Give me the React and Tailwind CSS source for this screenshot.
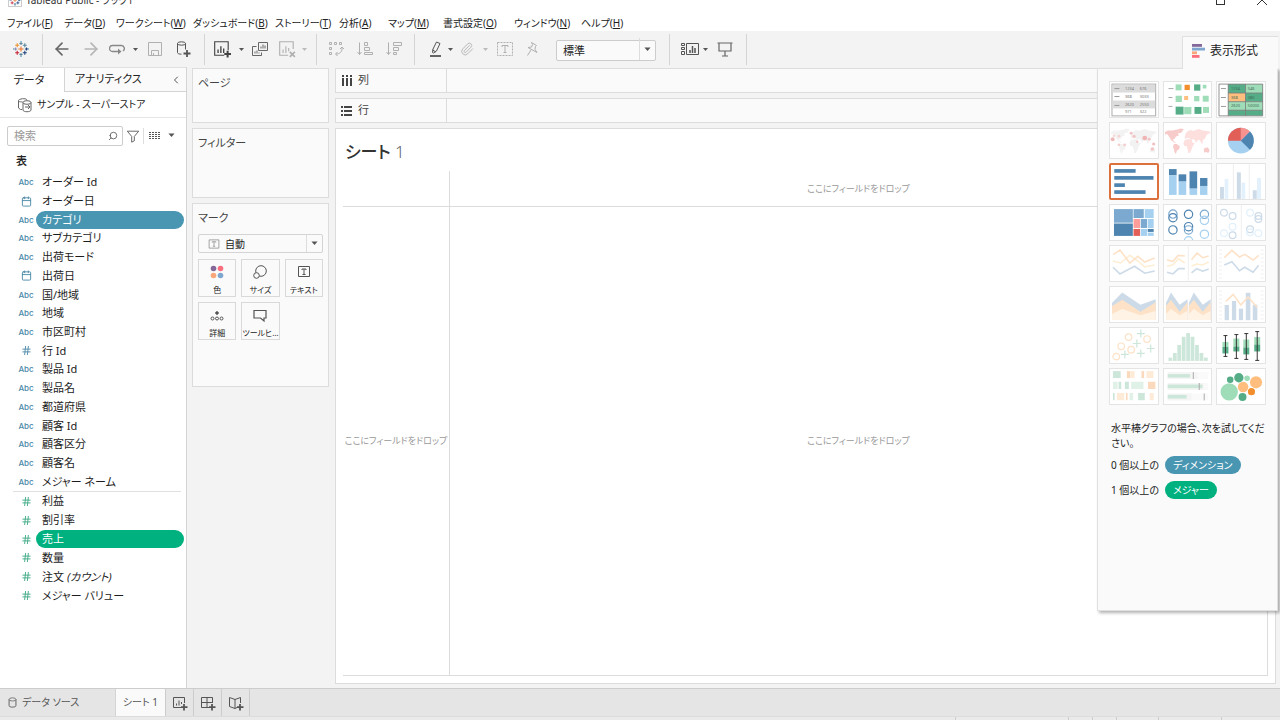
import { ArrowLeft, ArrowRight, Calendar, ChevronLeft, Hash, Paperclip, Search } from 'lucide-react';

const MENUS = [
  { label: 'ファイル', key: 'F', width: 'w-[57px]' },
  { label: 'データ', key: 'D', width: 'w-[52px]' },
  { label: 'ワークシート', key: 'W', width: 'w-[77px]' },
  { label: 'ダッシュボード', key: 'B', width: 'w-[82px]' },
  { label: 'ストーリー', key: 'T', width: 'w-[64px]' },
  { label: '分析', key: 'A', width: 'w-[49px]' },
  { label: 'マップ', key: 'M', width: 'w-[55px]' },
  { label: '書式設定', key: 'O', width: 'w-[71px]' },
  { label: 'ウィンドウ', key: 'N', width: 'w-[67px]' },
  { label: 'ヘルプ', key: 'H', width: 'w-[57px]' },
];

const DIMENSIONS = [
  { name: 'オーダー Id', type: 'abc' },
  { name: 'オーダー日', type: 'date' },
  { name: 'カテゴリ', type: 'abc', selected: true },
  { name: 'サブカテゴリ', type: 'abc' },
  { name: '出荷モード', type: 'abc' },
  { name: '出荷日', type: 'date' },
  { name: '国/地域', type: 'abc' },
  { name: '地域', type: 'abc' },
  { name: '市区町村', type: 'abc' },
  { name: '行 Id', type: 'num' },
  { name: '製品 Id', type: 'abc' },
  { name: '製品名', type: 'abc' },
  { name: '都道府県', type: 'abc' },
  { name: '顧客 Id', type: 'abc' },
  { name: '顧客区分', type: 'abc' },
  { name: '顧客名', type: 'abc' },
  { name: 'メジャー ネーム', type: 'abc' },
];

const MEASURES = [
  { name: '利益', type: 'num' },
  { name: '割引率', type: 'num' },
  { name: '売上', type: 'num', selected: true },
  { name: '数量', type: 'num' },
  { name: '注文', note: '(カウント)', type: 'num' },
  { name: 'メジャー バリュー', type: 'num' },
];

// chart palette
const DK = '#4e84b0';
const MD = '#7ba9cf';
const LT = '#a5d0f0';
const G1 = '#55ad88';
const G2 = '#9fdcb8';
const O1 = '#f28e2b';
const O2 = '#ffbe7d';
const FB = '#cddbe8';
const FO = '#fde2c8';
const FY = '#fdeed4';
const FG = '#cde6da';

function Rects({ items }) {
  return items.map(([x, y, w, h, fill], i) => <rect key={i} x={x} y={y} width={w} height={h} fill={fill} />);
}

function Circles({ items }) {
  return items.map(([cx, cy, r, fill], i) => <circle key={i} cx={cx} cy={cy} r={r} fill={fill} />);
}

function Rings({ items, width = 1.2 }) {
  return items.map(([cx, cy, r, stroke], i) => (
    <circle key={i} cx={cx} cy={cy} r={r} fill="none" stroke={stroke} strokeWidth={width} />
  ));
}

function Lines({ items }) {
  return items.map(([points, stroke], i) => (
    <polyline key={i} points={points} fill="none" stroke={stroke} strokeWidth="1.6" />
  ));
}

function Areas({ items }) {
  return items.map(([points, fill], i) => <polygon key={i} points={points} fill={fill} />);
}

function Cells({ items, fill }) {
  return items.map(([x, y, t]) => (
    <text key={`${x}-${y}`} x={x} y={y} fontSize="4" fill={fill}>{t}</text>
  ));
}

function World({ fill, fill2 }) {
  return (
    <>
      <path fill={fill2} d="M2 10l3-1.500 5 0 4-1 3 3-2 1 1 2-3 1-1 2-2 1 1 2 2 1-1 .5-4-3-1-2-2-3-1-1-2 .5zM11 22l3 0 3 2.500-1 3-2 1-1 3.500-1.500-2-.5-3-1-2zM14 8l3-1.500 4 .5-2 3-2 1.500-1-2z" />
      <path fill={fill} d="M22 14l1-3 3-2.500 3-.5 1 1 6-2 4 1.500 7 1 1 1.500-3 1-1 1-1 2-1 2-2 1 0 3-1 1-2-4-2 0-1.500 3-1.500-3-2-1-1 1-3-2-2 0-2 1zM22 18l4-1 3 1 1 3 2 0-2 3-1 3-2 4-1.500 0-1-5-1-2-2 0-1-3z" />
      <path fill={fill2} d="M41 27l2-1.500 1 .5 1-1 2 3.500-1.500 2.500-2-1-2 .5z" />
    </>
  );
}

function SideTicks() {
  return (
    <path
      stroke="#ececec"
      strokeWidth=".8"
      d="M3 5h3M3 9h3M3 13h3M3 17h3M3 21h3M3 25h3M3 29h3M3 33h3M45 5h3M45 9h3M45 13h3M45 17h3M45 21h3M45 25h3M45 29h3M45 33h3"
    />
  );
}

function Whisker({ x, top, q1, mid, q3, bottom }) {
  return (
    <>
      <rect x={x - 3} y={q1} width="6" height={mid - q1} fill={G2} />
      <rect x={x - 3} y={mid} width="6" height={q3 - mid} fill={G1} />
      <path d={`M${x} ${top}V${bottom}M${x - 2} ${top}h4M${x - 2} ${bottom}h4`} stroke="#333" strokeWidth="1" />
    </>
  );
}

const CHARTS = [
  {
    name: 'テキスト表',
    art: (
      <>
        <rect x="3" y="3" width="44" height="32" fill="#fff" stroke="#aaa" />
        <Rects items={[[3.5, 3.5, 43, 8, '#dcdcdc'], [3.5, 19.5, 43, 8, '#dcdcdc']]} />
        <path d="M5.500 7.500h5M5.500 15.500h5M5.500 24.500h5" stroke="#999" />
        <Cells fill="#777" items={[[16, 9, '1234'], [31, 9, '676'], [16, 17, '368'], [31, 17, '3033'], [16, 25.5, '2620'], [31, 25.5, '2550'], [16, 32.500, '971'], [31, 32.500, '322']]} />
      </>
    ),
  },
  {
    name: 'ヒートマップ',
    art: (
      <>
        <path d="M5.500 7.500h5M5.500 16.500h4M5.500 25.500h4" stroke="#aaa" />
        <Rects
          items={[
            [12.7, 3.3, 6, 6, G2], [21.7, 3.7, 5.3, 5.3, O1], [31.3, 3.3, 6.3, 6.3, G1], [40, 3.7, 3.7, 3.7, G2],
            [12.7, 14.7, 6.3, 6.3, G2], [21.3, 15, 4, 4, O2], [31.3, 15, 5.3, 5.3, G2], [40, 14.7, 6, 6, G2],
            [12.7, 25.7, 8, 8, G1], [21.3, 26, 7.3, 7.3, G2], [31.7, 26, 7, 7, G1], [40.3, 26, 6, 6, G2],
          ]}
        />
      </>
    ),
  },
  {
    name: 'ハイライト表',
    art: (
      <>
        <Rects
          items={[
            [12.3, 3, 17.4, 9, G1], [29.7, 3, 17.3, 9, G2], [12.3, 12, 17.4, 8.7, O2], [29.7, 12, 17.3, 8.7, G1],
            [12.3, 20.7, 17.4, 8.6, G2], [29.7, 20.7, 17.3, 8.6, G2], [12.3, 29.3, 17.4, 5.5, G1], [29.7, 29.3, 17.3, 5.5, G1],
          ]}
        />
        <path d="M3 3h44v32H3zM12.300 3v32M29.700 3v32M12.300 12H47M12.300 20.700H47M12.300 29.300H47" fill="none" stroke="#777" strokeWidth=".8" />
        <path d="M5 7.500h5M5 16.500h5M5 25.500h5" stroke="#999" />
        <Cells fill="#3f6b56" items={[[15, 9, '1234'], [32, 9, '546'], [15, 17.500, '368'], [32, 17.500, '380'], [15, 26.500, '2620'], [32, 26.500, '50000']]} />
      </>
    ),
  },
  {
    name: '記号マップ',
    art: (
      <>
        <World fill="#f2f2f2" fill2="#f3f3f3" />
        <Circles
          items={[
            [3.7, 17.3, 2, '#efb9b9'], [5, 13.7, 1.2, '#f7d5d5'], [10, 14.3, 1.5, '#f7d5d5'], [22.3, 11.3, 1.5, '#f2c4c4'], [25.3, 14.3, 1.6, '#f2c4c4'],
            [28.3, 19.7, 1.2, '#f5cccc'], [36, 16, 2.4, '#efb4b4'], [40.500, 17.3, 1.5, '#f2c4c4'], [45, 22, 1.6, '#f2c0c0'],
            [15.7, 23, 1.4, '#f5cccc'], [10, 22.7, 1.3, '#f5cccc'], [43.7, 27, 1.7, '#f2c4c4'],
          ]}
        />
      </>
    ),
  },
  { name: 'マップ', art: <World fill="#fddfde" fill2="#f6cbc9" /> },
  {
    name: '円グラフ',
    art: (
      <>
        <circle cx="25" cy="18.700" r="13" fill={LT} />
        <path d="M25 18.700V5.700A13 13 0 0 1 34.200 9.500z" fill="#f7928f" />
        <path d="M25 18.700L34.200 9.500A13 13 0 0 1 34.200 27.900z" fill={DK} />
        <path d="M25 18.700H12A13 13 0 0 1 25 5.700z" fill="#e15f57" />
      </>
    ),
  },
  {
    name: '水平棒',
    selected: true,
    art: <Rects items={[[5.3, 6, 21.500, 3.7, DK], [5.3, 13, 39.500, 3.7, DK], [5.3, 20.3, 10.7, 3.7, DK], [5.3, 27.3, 31.500, 3.7, DK]]} />,
  },
  {
    name: '積み上げ棒',
    art: (
      <Rects
        items={[
          [6, 6, 7.7, 6.3, DK], [6, 12.3, 7.7, 19.7, LT], [15.7, 11.3, 7.7, 7.3, DK], [15.7, 18.6, 7.7, 13.4, LT],
          [26.7, 8.3, 7.7, 17.4, DK], [26.7, 25.7, 7.7, 6.3, LT], [37.3, 15, 7.4, 8, DK], [37.3, 23, 7.4, 9, LT],
        ]}
      />
    ),
  },
  {
    name: '並列棒',
    art: (
      <>
        <path d="M17.500 1v35M33.500 1v35" stroke="#eee" />
        <Rects
          items={[
            [4, 24, 4, 12, FB], [8.7, 16, 3.7, 20, '#e3f1fc'], [21, 9.3, 4, 26.7, FB],
            [25.7, 19.7, 3.7, 16.3, '#e3f1fc'], [37, 27.3, 4, 8.7, FB], [41.3, 15, 4, 21, '#e3f1fc'],
          ]}
        />
      </>
    ),
  },
  {
    name: 'ツリーマップ',
    art: (
      <Rects
        items={[
          [5, 5, 19, 13.7, MD], [5, 19.500, 19, 12.500, DK], [24.7, 5, 10.3, 9, MD], [36, 5, 9, 9, LT],
          [24.7, 15, 6.6, 9, '#ff9d9a'], [32, 15, 6.3, 9, MD], [39, 15, 6, 9, LT],
          [24.7, 25, 6.6, 7, '#e15f57'], [32, 25, 6.3, 7, LT], [39, 25, 6, 3, DK], [39, 28.7, 6, 3.3, LT],
        ]}
      />
    ),
  },
  {
    name: '円ビュー',
    art: (
      <Rings
        items={[
          [10, 10, 4.2, MD], [10, 13.7, 4.2, DK], [10, 26, 4.2, DK], [25.7, 10.3, 4.2, DK], [25.7, 22.7, 4.2, DK],
          [25.7, 26, 4.2, MD], [25.7, 37, 4.2, LT], [41.7, 10.3, 4.2, MD], [41.7, 16.3, 4.2, LT], [41.7, 30.3, 4.2, LT],
        ]}
      />
    ),
  },
  {
    name: '並列円',
    art: (
      <>
        <path d="M25.500 1v35" stroke="#eee" />
        <Rings
          items={[
            [8, 8.7, 3.4, FB], [16.7, 12, 3.4, FB], [16.7, 22.7, 3.4, '#e3f1fc'], [8, 29.3, 3.4, '#e3f1fc'], [16.7, 31.3, 3.4, FB],
            [34.3, 8.7, 3.4, '#e3f1fc'], [42.7, 12, 3.4, FB], [42.7, 15, 3.4, FB], [34.3, 25.3, 3.4, FB], [34.3, 28.3, 3.4, '#e3f1fc'], [42.7, 29.3, 3.4, '#e3f1fc'],
          ]}
        />
      </>
    ),
  },
  {
    name: '線 (連続)',
    art: (
      <Lines
        items={[
          ['4,16 11.700,18 21,10.300 29,16 36,22 46,20', FY],
          ['4,9.500 11,5 21,18 29,11.300 36,17 46,13', FO],
          ['4,22.300 11,29 25.700,21.300 36,28.300 46,26', FB],
        ]}
      />
    ),
  },
  {
    name: '線 (不連続)',
    art: (
      <>
        <path d="M25.500 1v35" stroke="#eee" />
        <Lines
          items={[
            ['4,15 10,16.300 15.300,10.300 22,11', FO], ['28.700,14.700 34.300,8 40,12.700 46,11', FO],
            ['4,21.300 10,19.700 15.700,13.700 22,18', FY], ['28.700,21 34,19 40,20 46,17', FY],
            ['4,27.300 10,29 15.700,23.700 22,23.700', FB], ['28.700,28 34,23.700 40,26.300 46,24', FB],
          ]}
        />
      </>
    ),
  },
  {
    name: '二重線',
    art: (
      <>
        <SideTicks />
        <Lines
          items={[
            ['8.300,12.700 16,5.300 23.700,12 29,9.300 37.300,15 43,10.300', FO],
            ['8.300,20 16,16.700 23.700,25.700 29,22.300 37.300,27.300 43,20.300', FB],
          ]}
        />
      </>
    ),
  },
  {
    name: '面 (連続)',
    art: (
      <Areas
        items={[
          ['3,17 13.300,6.300 31.700,18.700 47,13.300 47,34 3,34', FB],
          ['3,20 13.300,13.700 31.700,25.700 47,16.300 47,34 3,34', FO],
          ['3,28 13.300,23 31.700,29.300 47,25 47,34 3,34', '#fff3e6'],
        ]}
      />
    ),
  },
  {
    name: '面 (不連続)',
    art: (
      <Areas
        items={[
          ['3,17 8,6.300 16.700,18.700 24.700,13.300 24.700,34 3,34', FB],
          ['3,20 8,13.700 16.700,25.700 24.700,16.300 24.700,34 3,34', FO],
          ['3,28 8,23 16.700,29.300 24.700,25 24.700,34 3,34', '#fff3e6'],
          ['26,17 31,6.300 40,18.700 48,13.300 48,34 26,34', FB],
          ['26,20 31,13.700 40,25.700 48,16.300 48,34 26,34', FO],
          ['26,28 31,23 40,29.300 48,25 48,34 26,34', '#fff3e6'],
        ]}
      />
    ),
  },
  {
    name: '二重組み合わせ',
    art: (
      <>
        <SideTicks />
        <Rects items={[[8.7, 19, 4.3, 15.3, FB], [16, 15, 4.3, 19.3, FB], [23, 22.7, 4.3, 11.6, FB], [30, 6.7, 4.600, 27.6, FB], [37, 18.7, 4.600, 15.6, FB]]} />
        <Lines items={[['10,15.300 17.300,8.300 25,19 32.300,11 41.300,21.300', FO]]} />
      </>
    ),
  },
  {
    name: '散布図',
    art: (
      <>
        <Rings items={[[7.3, 29.7, 3.3, FO], [12.3, 19.3, 3.3, FO], [19.7, 10, 3.3, FO], [22.3, 22.7, 3.3, FO], [38.3, 12, 3.3, FO]]} />
        <path d="M12 27.500h8m-4-4v8M28 6.500h8m-4-4v8M24 16.500h8m-4-4v8M28 26.500h8m-4-4v8M38 21.500h8m-4-4v8" stroke={FG} strokeWidth="1.200" />
      </>
    ),
  },
  {
    name: 'ヒストグラム',
    art: (
      <Rects
        items={[
          [5.500, 30.7, 3.8, 3.3, FG], [10, 26, 3.8, 8, FG], [14.4, 18, 3.8, 16, FG], [18.9, 9.7, 3.8, 24.3, FG], [23.4, 6, 3.8, 28, FG],
          [27.8, 9.7, 3.8, 24.3, FG], [32.3, 18, 3.8, 16, FG], [36.800, 26, 3.8, 8, FG], [41.2, 30.7, 3.8, 3.3, FG],
        ]}
      />
    ),
  },
  {
    name: '箱ヒゲ図',
    art: (
      <>
        <Whisker x={9.5} top={8.5} q1={15} mid={20} q3={26.5} bottom={29.5} />
        <Whisker x={20.5} top={7.5} q1={11.5} mid={19.5} q3={24.5} bottom={31.5} />
        <Whisker x={30.5} top={6.5} q1={12.5} mid={20.5} q3={27.5} bottom={32.5} />
        <Whisker x={41.5} top={4.5} q1={10} mid={17.5} q3={24.5} bottom={33.5} />
      </>
    ),
  },
  {
    name: 'ガント',
    art: (
      <Rects
        items={[
          [4, 3, 7.7, 7, FG], [18, 3, 3.5, 7, '#fbd9bd'], [21.500, 3, 4.2, 7, '#fdebd8'], [32.7, 3, 2.7, 7, '#fbd9bd'], [37.7, 3, 7, 7, '#fdebd8'],
          [4, 13.7, 4.7, 7.3, '#e0f2e7'], [9.7, 13.7, 2.6, 7.3, FG], [16, 13.7, 4, 7.3, FG], [22.3, 13.7, 12.4, 7.3, '#e0f2e7'], [39.3, 13.7, 7.4, 7.3, '#fbd9bd'],
          [4, 25, 1.7, 7.3, FG], [8, 25, 7.3, 7.3, '#fdebd8'], [17, 25, 1.7, 7.3, '#fbd9bd'], [20.7, 25, 3.600, 7.3, '#e0f2e7'], [29.3, 25, 6.7, 7.3, FG], [41, 25, 4, 7.3, '#fdebd8'],
        ]}
      />
    ),
  },
  {
    name: 'ブレットグラフ',
    art: (
      <>
        <Rects
          items={[
            [4.7, 4, 41, 7, '#fafafa'], [4.7, 15, 41, 7, '#fafafa'], [4.7, 25.5, 41, 7, '#fafafa'],
            [4.7, 4, 30, 7, '#f5f5f5'], [4.7, 15, 36, 7, '#f5f5f5'], [4.7, 25.5, 24, 7, '#f5f5f5'],
            [4.7, 6, 22.5, 3.5, FG], [4.7, 16.5, 35, 3.7, FG], [4.7, 27, 19, 3.7, FG],
          ]}
        />
        <path d="M30.500 4v7M36.500 15v7M41.500 25.500v7" stroke="#aaa" />
      </>
    ),
  },
  {
    name: 'パック バブル',
    art: (
      <Circles
        items={[
          [14.3, 11.7, 3.3, G1], [23, 9.7, 4.7, G1], [31.3, 10.3, 2.8, G2], [40.3, 14.3, 6.1, O2],
          [13.3, 24, 8.7, G2], [27.3, 19, 5.3, O2], [35.7, 23.7, 3.6, O1], [26.7, 29, 4, G1],
        ]}
      />
    ),
  },
];

const LOGO_MARKS = [
  [8, 8, 2.6, '#e8762d'], [8, 2.500, 1.6, '#5b879b'], [8, 13.5, 1.6, '#5b879b'], [2.500, 8, 1.600, '#8c8fb8'], [13.5, 8, 1.6, '#1f447e'],
  [4.200, 4.200, 2, '#eb912c'], [11.800, 4.200, 2, '#59879b'], [4.200, 11.800, 2, '#c72035'], [11.800, 11.800, 2, '#1f457e'],
];

function TableauLogo({ className }) {
  return (
    <svg viewBox="0 0 16 16" className={className} aria-hidden="true">
      {LOGO_MARKS.map(([x, y, r, c]) => (
        <path key={`${x}-${y}`} d={`M${x - r} ${y}h${r * 2}M${x} ${y - r}v${r * 2}`} stroke={c} strokeWidth="1.1" />
      ))}
      <path d="M7 .5h2M7 15.500h2M.5 7v2M15.500 7v2" stroke="#7db1c9" strokeWidth=".8" />
    </svg>
  );
}

function Glyph({ className = 'size-4', children }) {
  return (
    <svg viewBox="0 0 16 16" fill="none" stroke="currentColor" strokeWidth="1" className={`shrink-0 ${className}`} aria-hidden="true">
      {children}
    </svg>
  );
}

function Caret({ className = 'text-[#555]' }) {
  return (
    <svg viewBox="0 0 8 5" className={`w-[7px] shrink-0 ${className}`} aria-hidden="true">
      <path d="M0.500 .5h7L4 4.500z" fill="currentColor" />
    </svg>
  );
}

function ToolButton({ label, className, children }) {
  return (
    <button type="button" aria-label={label} className={`flex h-full shrink-0 items-center justify-center ${className}`}>
      {children}
    </button>
  );
}

function ToolCaret({ label, className, dim }) {
  return (
    <ToolButton label={label} className={className}>
      <svg viewBox="0 0 5 3" className={`h-[3px] w-[5px] shrink-0 ${dim ? 'text-[#bbb]' : 'text-[#555]'}`} aria-hidden="true">
        <path d="M0 0h5L2.500 3z" fill="currentColor" />
      </svg>
    </ToolButton>
  );
}

function Separator({ className = '' }) {
  return <div className={`h-[31px] w-px shrink-0 bg-[#d4d4d4] ${className}`} />;
}

function TitleBar() {
  return (
    <div className="flex h-2 shrink-0 items-end overflow-hidden pr-[13px] pl-2 text-[#333]">
      <div className="flex h-4 w-full items-center">
        <span className="size-[14px] shrink-0 border border-[#ccc]">
          <TableauLogo className="size-3" />
        </span>
        <span className="ml-1 text-[10px] leading-4">Tableau Public - ブック1</span>
        <button type="button" aria-label="最大化" className="mr-8 ml-auto size-[9px] border border-[#333]" />
        <button type="button" aria-label="閉じる" className="size-[10px]">
          <svg viewBox="0 0 10 10" stroke="#333" aria-hidden="true"><path d="M0 0l10 10M10 0L0 10" /></svg>
        </button>
      </div>
    </div>
  );
}

function MenuBar() {
  return (
    <nav className="flex h-[23px] shrink-0 items-end pl-[7px] text-[#222]">
      {MENUS.map(m => (
        <button key={m.key} type="button" className={`shrink-0 text-left text-[10px] leading-4 whitespace-nowrap ${m.width}`}>
          {m.label}(<u>{m.key}</u>)
        </button>
      ))}
    </nav>
  );
}

function Toolbar() {
  return (
    <div className="flex h-9 shrink-0 items-center bg-[#f3f3f3] text-[#666]">
      <ToolButton label="スタート ページ" className="w-[42px]"><TableauLogo className="size-4" /></ToolButton>
      <Separator />
      <ToolButton label="元に戻す" className="w-[38px]"><ArrowLeft className="size-5" strokeWidth={2} /></ToolButton>
      <ToolButton label="やり直し" className="w-5 text-[#b5b5b5]"><ArrowRight className="size-5" strokeWidth={2} /></ToolButton>
      <ToolButton label="アニメーションの再生" className="w-8 text-[#888]">
        <Glyph>
          <path d="M11 10.500H3.500a3 3 0 0 1 0-6h9a3 3 0 0 1 1.500 5.500" strokeWidth="1.300" />
          <path d="M9 7.500L12.500 10.500 9 13.500z" fill="currentColor" stroke="none" />
        </Glyph>
      </ToolButton>
      <ToolCaret label="再生オプション" className="w-[5px]" />
      <ToolButton label="保存" className="w-[34px] text-[#b0b0b0]">
        <Glyph><path d="M1.500 1.500h13v13h-13zM4.500 14.500v-5h7v5M6.500 12v2.500" /></Glyph>
      </ToolButton>
      <ToolButton label="新しいデータ ソース" className="w-[22px] text-[#555]">
        <Glyph>
          <ellipse cx="6.500" cy="2.500" rx="4" ry="1.700" />
          <path d="M2.500 2.500v9c0 1 1.500 1.700 4 1.700M10.500 2.500v6" />
          <path d="M12 9v7M8.500 12.500h7" strokeWidth="1.800" />
        </Glyph>
      </ToolButton>
      <Separator className="ml-[10px]" />
      <ToolButton label="新しいワークシート" className="w-[34px] text-[#444]">
        <Glyph className="size-[18px]">
          <path d="M10 13.500H1.500v-12h12V9" />
          <path d="M4.500 11.500v-3M7 11.500v-6M9.500 11.500v-4" strokeWidth="1.200" />
          <path d="M13 9.500v6M10 12.500h6" strokeWidth="1.800" />
        </Glyph>
      </ToolButton>
      <ToolCaret label="ワークシート オプション" className="w-1" />
      <ToolButton label="複製" className="w-[33px]">
        <Glyph>
          <path d="M6.500 1.500h9v8h-9zM4.500 5.500h-4v9h9v-3M9 7.500v-2M11 7.500v-4M13 7.500v-3M3 12.500v-2M5 12.500v-3M7 12.500v-1" />
        </Glyph>
      </ToolButton>
      <ToolButton label="シートのクリア" className="w-[22px] text-[#b0b0b0]">
        <Glyph className="size-[18px]">
          <path d="M9 13.500H1.500v-12h12V8M4.500 11.500v-3M7 11.500v-6M9.500 10v-3" />
          <path d="M10.500 10.500l4.500 4.500M15 10.500L10.500 15" strokeWidth="1.500" />
        </Glyph>
      </ToolButton>
      <ToolCaret label="クリア オプション" className="w-[13px]" dim />
      <Separator className="ml-[5px]" />
      <ToolButton label="行と列の交換" className="w-[38px] text-[#b0b0b0]">
        <Glyph>
          <path d="M1.500 1.500h2v2h-2zM6.500 1.500h2v2h-2zM11.500 1.500h2v2h-2zM1.500 6.500h2v2h-2zM1.500 11.500h2v2h-2zM14 6.500c.5 4-2 6.500-6 6.500M12 8l2-2 2 2M9.500 11l-2 2 2 2" />
        </Glyph>
      </ToolButton>
      <ToolButton label="昇順で並べ替え" className="w-5 text-[#b0b0b0]">
        <Glyph><path d="M2.500 1.500v12M.5 11l2 2.500 2-2.500M7.500 1.500h3v3h-3zM7.500 6.500h5v3h-5zM7.500 11.500h8v2h-8z" /></Glyph>
      </ToolButton>
      <ToolButton label="降順で並べ替え" className="w-[37px] text-[#b0b0b0]">
        <Glyph><path d="M2.500 1.500v12M.5 11l2 2.500 2-2.500M7.500 1.500h8v3h-8zM7.500 6.500h5v3h-5zM7.500 11.500h3v2h-3z" /></Glyph>
      </ToolButton>
      <Separator className="ml-[2px]" />
      <ToolButton label="ハイライト" className="ml-2 w-[23px] text-[#555]">
        <Glyph>
          <path d="M9.500 1l3.500 1.500-3.500 7.500-3 2-1-.5.500-3.500zM5.500 9l3.500 2" />
          <path d="M3 15h11" strokeWidth="1.800" />
        </Glyph>
      </ToolButton>
      <ToolCaret label="ハイライト オプション" className="w-2" />
      <ToolButton label="グループ メンバー" className="w-[26px] text-[#b0b0b0]"><Paperclip className="size-[14px]" strokeWidth={1.5} /></ToolButton>
      <ToolCaret label="グループ オプション" className="w-[10px]" dim />
      <ToolButton label="マーク ラベルを表示" className="w-[30px] text-[#b0b0b0]">
        <Glyph>
          <path d="M.5 1.500h15v13H.5z" strokeDasharray="2 1" />
          <path d="M5 6V4.500h6V6M8 4.500v7M6.500 11.500h3" />
        </Glyph>
      </ToolButton>
      <ToolButton label="軸の固定" className="w-6 text-[#b0b0b0]">
        <Glyph><path d="M7.500 1.500l5 3-1 1-.5 3 2 3-9-5 3.500-.5 1-2.500zM7 9l-3.500 5.500" /></Glyph>
      </ToolButton>
      <div className="relative ml-3 w-[100px] shrink-0">
        <select aria-label="表示サイズ" defaultValue="標準" className="h-[21px] w-full appearance-none rounded-xs border border-[#ccc] bg-[#fafafa] pl-1.5 text-[11px] leading-4 text-[#222]">
          <option>標準</option>
          <option>幅を合わせる</option>
          <option>ビュー全体</option>
        </select>
        <span className="pointer-events-none absolute inset-y-px right-px flex w-4 items-center justify-center border-l border-[#ddd]"><Caret /></span>
      </div>
      <Separator className="ml-[13px]" />
      <ToolButton label="カードの表示/非表示" className="ml-2 w-6 text-[#555]">
        <svg viewBox="0 0 18 14" className="w-[18px]" fill="none" stroke="currentColor" aria-hidden="true">
          <path d="M.5 1.500h3v2h-3zM.5 5.500h3v2h-3zM.5 9.500h3v3h-3zM5.500 1.500h12v11h-12z" />
          <path d="M9 11V8M11.500 11V4M14 11V6" strokeWidth="1.500" />
        </svg>
      </ToolButton>
      <ToolCaret label="カード オプション" className="w-[7px]" />
      <ToolButton label="プレゼンテーション モード" className="w-8">
        <Glyph><path d="M.5 2h15M2 2v8h12V2M8 10v5M5 15h6" strokeWidth="1.200" /></Glyph>
      </ToolButton>
      <Separator className="ml-[5px]" />
    </div>
  );
}

function FieldIcon({ type }) {
  if (type === 'date') return <Calendar className="size-[11px]" strokeWidth={2} />;
  if (type === 'num') return <Hash className="size-[11px]" strokeWidth={2} />;
  return <span className="font-['Inter',sans-serif] text-[8px] font-medium">Abc</span>;
}

function FieldList({ fields, iconColor, pillColor, className }) {
  return (
    <ul className={`grid auto-rows-fr ${className}`}>
      {fields.map(f => (
        <li key={f.name} className="flex min-h-0 items-center pr-[2px] pl-4">
          <span className={`flex w-5 shrink-0 justify-center ${iconColor}`}><FieldIcon type={f.type} /></span>
          <button
            type="button"
            className={`h-[18px] flex-1 truncate rounded-full pl-1.5 text-left text-[11px] leading-[18px] ${f.selected ? `text-white ${pillColor}` : 'text-[#1c1c1c]'}`}
          >
            {f.name}
            {f.note && <i> {f.note}</i>}
          </button>
        </li>
      ))}
    </ul>
  );
}

function DataPane() {
  return (
    <aside className="flex w-[187px] shrink-0 flex-col border-r border-[#d4d4d4] bg-white">
      <div className="flex h-[25px] shrink-0 border-t border-[#e0e0e0] text-[11px] text-[#222]">
        <button type="button" className="w-16 shrink-0 pr-1.5">データ</button>
        <div className="flex flex-1 items-center border-b border-l border-[#d4d4d4] bg-[#fafafa] pr-1 pl-2.5">
          <button type="button">アナリティクス</button>
          <button type="button" aria-label="折りたたむ" className="ml-auto text-[#555]"><ChevronLeft className="size-3" /></button>
        </div>
      </div>
      <button type="button" className="flex h-[26px] shrink-0 items-center gap-1 border-b border-[#e6e6e6] pl-[17px] text-[10px] text-[#222]">
        <Glyph className="size-4 text-[#666]">
          <path d="M5 12.500H3.500L1.500 11V3.500C1.500 2 9 .5 10 3M1.500 4c1 1 2.500 1 4 .8" />
          <ellipse cx="10" cy="5.500" rx="4" ry="1.800" />
          <path d="M6 5.500v7.500c0 2.300 8 2.300 8 0V5.500M8 10h5M11 8l2 2-2 2" />
        </Glyph>
        サンプル - スーパーストア
      </button>
      <div className="flex h-[35px] shrink-0 items-center pl-[7px]">
        <div className="flex h-5 w-[116px] items-center rounded-xs border border-[#ccc] pr-1 pl-1.5">
          <input aria-label="検索" placeholder="検索" className="min-w-0 flex-1 text-[11px] leading-4 outline-none placeholder:text-[#999]" />
          <Search className="size-[10px] -scale-x-100 text-[#555]" />
        </div>
        <button type="button" aria-label="フィルター" className="ml-[2px] flex w-4 justify-center text-[#555]">
          <Glyph className="size-[14px]"><path d="M1.500 2.500h13L9.500 8.500v5l-3 1.500V8.500z" /></Glyph>
        </button>
        <span className="ml-[2px] h-4 w-px bg-[#ddd]" />
        <button type="button" aria-label="表示オプション" className="ml-[5px] flex items-center gap-2 text-[#555]">
          <svg viewBox="0 0 11 7" className="h-[7px] w-[11px]" stroke="currentColor" aria-hidden="true">
            <path d="M0 .5h11M0 2.500h11M0 4.500h11M0 6.500h11" strokeDasharray="2 1" />
          </svg>
          <Caret />
        </button>
      </div>
      <h2 className="h-5 shrink-0 pl-4 text-[11px] leading-4 font-medium text-[#222]">表</h2>
      <FieldList fields={DIMENSIONS} iconColor="text-[#4a88a8]" pillColor="bg-[#4996b2]" className="h-[318px] shrink-0" />
      <hr className="mr-[5px] ml-[13px] border-[#e0e0e0]" />
      <FieldList fields={MEASURES} iconColor="text-[#3ba882]" pillColor="bg-[#00b180]" className="h-[113px] shrink-0" />
    </aside>
  );
}

function MarkButton({ label, children }) {
  return (
    <button type="button" className="flex h-[38px] min-w-0 flex-col items-center justify-between border border-[#d9d9d9] bg-[#fafafa] pt-1 text-[#555]">
      {children}
      <span className="text-[8px] leading-3 whitespace-nowrap text-[#222]">{label}</span>
    </button>
  );
}

function CardsColumn() {
  return (
    <div className="flex w-[137px] shrink-0 flex-col gap-[5px] text-[11px] leading-4 text-[#444]">
      <section className="h-[55px] border border-[#dcdcdc] bg-[#fafafa] px-[5px] py-1.5">ページ</section>
      <section className="h-[70px] border border-[#dcdcdc] bg-[#fafafa] px-[5px] py-1.5">フィルター</section>
      <section className="h-[184px] border border-[#dcdcdc] bg-[#fafafa] px-[5px] py-1.5">
        <h3>マーク</h3>
        <div className="relative mt-2">
          <select aria-label="マーク タイプ" defaultValue="自動" className="h-[19px] w-full appearance-none rounded-xs border border-[#d4d4d4] bg-[#fafafa] pl-[26px] text-[10px] leading-4 text-[#222]">
            <option>自動</option>
            <option>棒</option>
            <option>線</option>
          </select>
          <span className="pointer-events-none absolute inset-y-0 left-[10px] flex items-center text-[#888]">
            <Glyph className="size-3"><path d="M1.500 2.500h13v11h-13zM5.500 6V5h5v1M8 5v6M6.500 11h3" /></Glyph>
          </span>
          <span className="pointer-events-none absolute inset-y-px right-px flex w-4 items-center justify-center border-l border-[#ddd]"><Caret /></span>
        </div>
        <div className="mt-[6px] grid grid-cols-3 gap-[5px]">
          <MarkButton label="色">
            <svg viewBox="0 0 16 16" className="size-4" aria-hidden="true">
              <Circles items={[[4.500, 4.500, 2.800, '#84689a'], [11.500, 4.500, 2.800, '#fa6e7e'], [4.500, 11.500, 2.800, '#f9a67a'], [11.500, 11.500, 2.800, '#7ea6cf']]} />
            </svg>
          </MarkButton>
          <MarkButton label="サイズ">
            <Glyph><circle cx="9" cy="7" r="5.300" /><circle cx="4.500" cy="11.500" r="2.800" fill="#fafafa" /></Glyph>
          </MarkButton>
          <MarkButton label="テキスト">
            <Glyph><path d="M2.500 2.500h11v10h-11zM6 6V5h4v1M8 5v5.500M6.500 10.500h3" /></Glyph>
          </MarkButton>
          <MarkButton label="詳細">
            <Glyph>
              <circle cx="8" cy="6" r="1.300" fill="currentColor" />
              <circle cx="3.500" cy="11.500" r="1.500" /><circle cx="8" cy="11.500" r="1.500" /><circle cx="12.500" cy="11.500" r="1.500" />
            </Glyph>
          </MarkButton>
          <MarkButton label="ツールヒ…">
            <Glyph><path d="M2 3.500h12v7.500h-2v3l-3.500-3H2z" strokeWidth="1.200" /></Glyph>
          </MarkButton>
        </div>
      </section>
    </div>
  );
}

function Shelf({ label, icon }) {
  return (
    <div className="flex h-[25px] shrink-0 border border-[#dcdcdc] bg-[#fafafa] text-[11px] text-[#444]">
      <div className="flex w-[111px] items-center gap-1.5 border-r border-[#dcdcdc] pl-[5px]">
        {icon}
        {label}
      </div>
    </div>
  );
}

function Sheet() {
  return (
    <section className="flex min-h-0 flex-1 flex-col border border-[#dcdcdc] bg-white pt-[9px] pr-[7px] pb-[7px] pl-[7px]">
      <h1 className="mb-[5px] pl-[2px] text-[17px] leading-7 font-medium text-[#333]">
        シート <span className="font-light text-[#666]">1</span>
      </h1>
      <div className="grid min-h-0 flex-1 grid-cols-[107px_1fr] grid-rows-[36px_1fr] border-r border-b border-[#dcdcdc] text-[9px] leading-3 text-[#999]">
        <div className="border-r border-b border-[#dcdcdc]" />
        <div className="flex items-center justify-center border-b border-[#dcdcdc]">ここにフィールドをドロップ</div>
        <div className="flex items-center justify-center border-r border-[#dcdcdc] whitespace-nowrap">ここにフィールドをドロップ</div>
        <div className="flex items-center justify-center">ここにフィールドをドロップ</div>
      </div>
    </section>
  );
}

function Canvas() {
  return (
    <main className="flex min-w-0 flex-1 flex-col gap-[5px]">
      <Shelf
        label="列"
        icon={
          <svg viewBox="0 0 11 11" className="w-[11px]" stroke="#444" strokeWidth="2" aria-hidden="true">
            <path d="M2 0v2M2 3v8M6 0v2M6 3v8M10 0v2M10 3v8" />
          </svg>
        }
      />
      <Shelf
        label="行"
        icon={
          <svg viewBox="0 0 11 11" className="w-[11px]" stroke="#444" strokeWidth="2" aria-hidden="true">
            <path d="M0 2h2M3 2h8M0 6h2M3 6h8M0 10h2M3 10h8" />
          </svg>
        }
      />
      <Sheet />
    </main>
  );
}

// Floating chart picker, sits above the canvas
function ShowMe() {
  return (
    <div className="absolute top-9 right-[2px] flex w-[181px] flex-col items-end">
      <button type="button" className="relative z-10 -mb-px flex h-[33px] w-24 items-center gap-1 border-t border-l border-[#e0e0e0] bg-[#fafafa] pb-1 pl-[9px] text-[12px] text-[#222]">
        <svg viewBox="0 0 14 14" className="size-[14px]" aria-hidden="true">
          <Rects items={[[0, 0, 10, 2.8, '#84689a'], [0, 3.700, 13, 2.8, '#7ea6cf'], [0, 7.400, 5, 2.8, '#f9a67a'], [0, 11, 7.5, 2.8, '#fa6e7e']]} />
        </svg>
        表示形式
      </button>
      <div className="h-[543px] w-full border border-[#e0e0e0] bg-[#fafafa] pt-3 pl-[11px] text-[#222] shadow-[2px_2px_3px_rgba(0,0,0,0.3)]">
        <div className="grid w-[157px] grid-cols-3 gap-x-1 gap-y-1">
          {CHARTS.map(c => (
            <button key={c.name} type="button" aria-label={c.name} className={`h-[37px] bg-white ${c.selected ? 'rounded-xs border-2 border-[#dd713d]' : 'border border-[#e4e4e4]'}`}>
              <svg viewBox={c.selected ? '2 2 46 33' : '1 1 48 35'} className="size-full" aria-hidden="true">{c.art}</svg>
            </button>
          ))}
        </div>
        <p className="mt-4 pl-[2px] text-[10px] leading-[15px]">
          水平棒グラフの場合、次を試してくだ<br />さい。
        </p>
        <div className="mt-[5px] flex items-center gap-1.5 pl-[2px] text-[10px] leading-[18px]">
          0 個以上の <span className="rounded-full bg-[#4996b2] px-2 text-white">ディメンション</span>
        </div>
        <div className="mt-[7px] flex items-center gap-1.5 pl-[2px] text-[10px] leading-[18px]">
          1 個以上の <span className="rounded-full bg-[#00b180] px-2 text-white">メジャー</span>
        </div>
      </div>
    </div>
  );
}

function NewTabButton({ label, children }) {
  return (
    <button type="button" aria-label={label} className="flex w-[28px] items-center justify-center border-r border-[#ccc]">
      <Glyph>
        {children}
        <path d="M12 9v6.500M9 12.200h6.500" strokeWidth="1.800" />
      </Glyph>
    </button>
  );
}

function SheetTabs() {
  return (
    <footer className="shrink-0 text-[#555]">
      <div className="flex h-7 border-t border-[#ccc] bg-[#e5e5e5] text-[10px]">
        <button type="button" className="flex w-[116px] items-center gap-1 border-r border-[#d4d4d4] pl-[7px] whitespace-nowrap">
          <Glyph className="size-[11px]"><ellipse cx="8" cy="3.500" rx="5" ry="2.300" /><path d="M3 3.500v9c0 3 10 3 10 0v-9" strokeWidth="1.300" /></Glyph>
          データ ソース
        </button>
        <button type="button" className="w-[50px] border-r border-[#ccc] bg-[#fafafa] whitespace-nowrap">シート 1</button>
        <NewTabButton label="新しいワークシート"><path d="M9 12.500H1.500v-10h11V8M4.500 10.500v-2M7 10.500v-5M9.500 9v-2" /></NewTabButton>
        <NewTabButton label="新しいダッシュボード"><path d="M9 12.500H1.500v-10h11V8M1.500 7.500h11M7 2.500v10" /></NewTabButton>
        <NewTabButton label="新しいストーリー"><path d="M9 12.500L7 13.500l-5.500-2v-9L7 4.500l5.500-2V8M7 4.500v9" /></NewTabButton>
      </div>
      <div className="flex h-1 justify-end border-t border-[#dcdcdc] bg-[#eaeaea]">
        <span className="w-[113px] border-l border-[#ccc]" />
        <span className="w-6 border-l border-[#ccc]" />
        <span className="w-6 border-l border-[#ccc]" />
        <span className="w-[42px] border-l border-[#ccc]" />
        <span className="w-[63px] border-l border-[#ccc]" />
        <span className="w-[59px] border-l border-[#ccc]" />
      </div>
    </footer>
  );
}

export default function App() {
  return (
    <div lang="ja" className="relative flex h-screen flex-col overflow-hidden bg-white font-['Noto_Sans','Noto_Sans_CJK_JP',sans-serif] [font-feature-settings:'palt']">
      <TitleBar />
      <MenuBar />
      <Toolbar />
      <div className="flex min-h-0 flex-1 bg-[#f3f3f3]">
        <DataPane />
        <div className="flex min-w-0 flex-1 gap-1.5 pt-px pr-1 pb-1 pl-[5px]">
          <CardsColumn />
          <Canvas />
        </div>
      </div>
      <SheetTabs />
      <ShowMe />
    </div>
  );
}
